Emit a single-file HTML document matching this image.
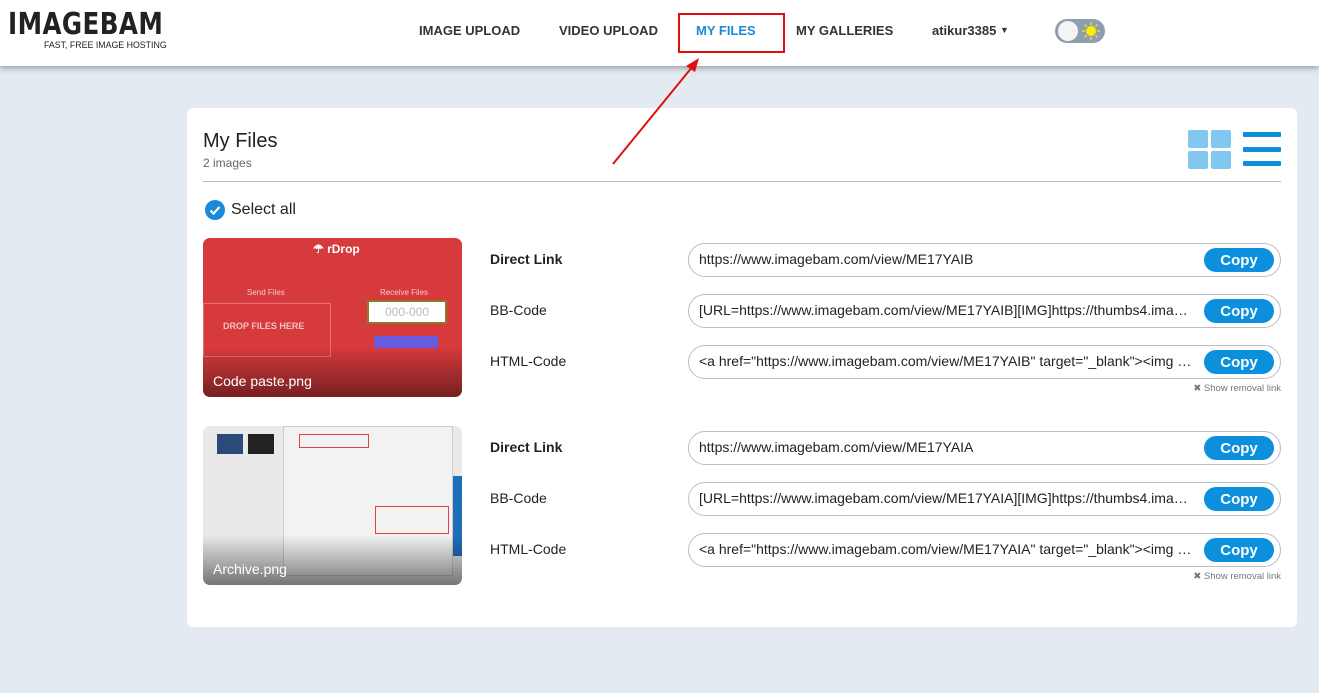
<!DOCTYPE html>
<html><head><meta charset="utf-8"><style>
*{box-sizing:border-box;margin:0;padding:0}
body{width:1319px;height:693px;background:#e3eaf2;font-family:"Liberation Sans",Arial,sans-serif;position:relative;overflow:hidden;color:#222}
.hdr{position:absolute;left:0;top:0;width:1319px;height:66px;background:#fff;box-shadow:0 2px 6px rgba(0,0,0,.35)}
.logo{position:absolute;left:8px;top:10px;font-weight:900;font-size:30px;letter-spacing:0.5px;color:#222;transform:scaleX(0.82);transform-origin:left;line-height:30px;font-family:"DejaVu Sans","Liberation Sans",sans-serif}
.tag{position:absolute;left:44px;top:40px;font-size:8.8px;color:#222;letter-spacing:0}
.nav{position:absolute;top:23px;font-size:13px;font-weight:bold;color:#333}
.box{position:absolute;left:678px;top:13px;width:107px;height:40px;border:2px solid #e01010}
.tog{position:absolute;left:1055px;top:19px;width:50px;height:24px;border-radius:12px;background:#8e9eb0}
.tog i{position:absolute;left:3px;top:2px;width:20px;height:20px;border-radius:50%;background:#f4f4f4}
.card{position:absolute;left:187px;top:108px;width:1110px;height:519px;background:#fff;border-radius:6px}
.thumb{position:absolute;left:203px;width:259px;height:159px;border-radius:7px;overflow:hidden}
.lab{position:absolute;left:490px;font-size:14px;color:#222}
.inp{position:absolute;left:688px;width:593px;height:34px;border:1px solid #b8bec6;border-radius:17px;font-size:14px;color:#222;padding:7px 0 0 10px;white-space:nowrap}
.cp{position:absolute;right:6px;top:4px;width:70px;height:24px;border-radius:12px;background:#0c8fdc;color:#fff;font-size:15px;font-weight:bold;text-align:center;line-height:26px}
.rm{position:absolute;right:38px;font-size:9.5px;color:#777}
.cap{position:absolute;left:10px;bottom:8px;color:#fff;font-size:14px}
</style></head><body>
<div class="hdr">
<div class="logo">IMAGEBAM</div>
<div class="tag">FAST, FREE IMAGE HOSTING</div>
<div class="nav" style="left:419px">IMAGE UPLOAD</div>
<div class="nav" style="left:559px">VIDEO UPLOAD</div>
<div class="nav" style="left:696px;color:#1a8ad8">MY FILES</div>
<div class="nav" style="left:796px">MY GALLERIES</div>
<div class="nav" style="left:932px">atikur3385 <span style="font-size:9px;vertical-align:2px">▼</span></div>
<div class="box"></div>
<div class="tog"><i></i><svg style="position:absolute;left:26px;top:2px" width="20" height="20" viewBox="0 0 20 20"><circle cx="10" cy="10" r="5" fill="#ffee00"/><g stroke="#ffee00" stroke-width="1.2"><path d="M10 1v3M10 16v3M1 10h3M16 10h3M3.6 3.6l2 2M14.4 14.4l2 2M3.6 16.4l2-2M14.4 5.6l2-2"/></g></svg></div>
</div>
<div class="card">
<div style="position:absolute;left:16px;top:22px;font-size:20px;color:#222">My Files</div>
<div style="position:absolute;left:16px;top:48px;font-size:12px;color:#666">2 images</div>
<div style="position:absolute;left:16px;top:73px;width:1078px;height:1px;background:#bbb"></div>
<svg style="position:absolute;left:1000px;top:22px" width="96" height="40"><g fill="#80c8ef"><rect x="1" y="0" width="20" height="18" rx="2"/><rect x="24" y="0" width="20" height="18" rx="2"/><rect x="1" y="21" width="20" height="18" rx="2"/><rect x="24" y="21" width="20" height="18" rx="2"/></g><g fill="#0c8fdc"><rect x="56" y="2" width="38" height="5" rx="1"/><rect x="56" y="17" width="38" height="5" rx="1"/><rect x="56" y="31" width="38" height="5" rx="1"/></g></svg>
<svg style="position:absolute;left:18px;top:92px" width="20" height="20"><circle cx="10" cy="10" r="10" fill="#1a8ad8"/><path d="M5.5 10.5l3 3 6-6.5" stroke="#fff" stroke-width="2.2" fill="none"/></svg>
<div style="position:absolute;left:44px;top:93px;font-size:16px;color:#222">Select all</div>
</div>
<svg style="position:absolute;left:0;top:0;z-index:5" width="1319" height="693"><line x1="613" y1="164" x2="693" y2="66" stroke="#e01010" stroke-width="2"/><path d="M699 58 L686 66 L695 72Z" fill="#e01010"/></svg>
<div class="thumb" style="top:238px;background:#d63a3c">
<div style="position:absolute;left:110px;top:4px;color:#fff;font-size:12px;font-weight:bold">☂ rDrop</div>
<div style="position:absolute;left:0;top:65px;width:128px;height:54px;border:1px solid #e87070"></div>
<div style="position:absolute;left:20px;top:83px;color:#f2c0c0;font-size:9px;font-weight:bold">DROP FILES HERE</div>
<div style="position:absolute;left:44px;top:50px;color:#f4caca;font-size:8px">Send Files</div>
<div style="position:absolute;left:177px;top:50px;color:#f4caca;font-size:8px">Receive Files</div>
<div style="position:absolute;left:164px;top:62px;width:80px;height:24px;border:2px solid #8c7a2a;background:#fff;color:#bbb;font-size:12px;text-align:center;line-height:20px">000-000</div>
<div style="position:absolute;left:171px;top:98px;width:64px;height:12px;background:#6a5ae0"></div>
<div style="position:absolute;left:0;bottom:0;width:259px;height:50px;background:linear-gradient(rgba(0,0,0,0),rgba(0,0,0,.45))"></div>
<div class="cap">Code paste.png</div>
</div>
<div class="thumb" style="top:426px;background:#e9e9ea">
<div style="position:absolute;left:80px;top:0;width:170px;height:150px;background:#f2f2f2;border:1px solid #ccc"></div>
<div style="position:absolute;left:14px;top:8px;width:26px;height:20px;background:#2a4b7a"></div>
<div style="position:absolute;left:45px;top:8px;width:26px;height:20px;background:#222"></div>
<div style="position:absolute;left:96px;top:8px;width:70px;height:14px;border:1px solid #d44"></div>
<div style="position:absolute;left:172px;top:80px;width:74px;height:28px;border:1px solid #d44"></div>
<div style="position:absolute;left:250px;top:50px;width:9px;height:80px;background:#1e6fb8"></div>
<div style="position:absolute;left:0;bottom:0;width:259px;height:50px;background:linear-gradient(rgba(0,0,0,0),rgba(0,0,0,.5))"></div>
<div class="cap">Archive.png</div>
</div>
<div class="lab" style="top:251px;font-weight:bold">Direct Link</div>
<div class="lab" style="top:302px">BB-Code</div>
<div class="lab" style="top:353px">HTML-Code</div>
<div class="inp" style="top:243px">https://www.imagebam.com/view/ME17YAIB<div class="cp">Copy</div></div>
<div class="inp" style="top:294px">[URL=https://www.imagebam.com/view/ME17YAIB][IMG]https://thumbs4.ima…<div class="cp">Copy</div></div>
<div class="inp" style="top:345px">&lt;a href="https://www.imagebam.com/view/ME17YAIB" target="_blank"&gt;&lt;img …<div class="cp">Copy</div></div>
<div class="rm" style="top:383px;right:38px">✖ Show removal link</div>
<div class="lab" style="top:439px;font-weight:bold">Direct Link</div>
<div class="lab" style="top:490px">BB-Code</div>
<div class="lab" style="top:541px">HTML-Code</div>
<div class="inp" style="top:431px">https://www.imagebam.com/view/ME17YAIA<div class="cp">Copy</div></div>
<div class="inp" style="top:482px">[URL=https://www.imagebam.com/view/ME17YAIA][IMG]https://thumbs4.ima…<div class="cp">Copy</div></div>
<div class="inp" style="top:533px">&lt;a href="https://www.imagebam.com/view/ME17YAIA" target="_blank"&gt;&lt;img …<div class="cp">Copy</div></div>
<div class="rm" style="top:571px">✖ Show removal link</div>
</body></html>
